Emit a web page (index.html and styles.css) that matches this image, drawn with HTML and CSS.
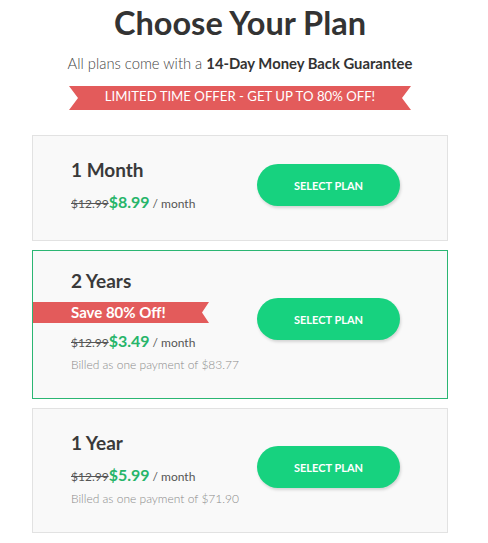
FILE: index.html
```html
<!DOCTYPE html>
<html>
<head>
<meta charset="utf-8">
<link rel="stylesheet" href="styles.css">
</head>
<body>
<div class="page">
  <h1 class="title">Choose Your Plan</h1>
  <p class="subtitle">All plans come with a <strong>14-Day Money Back Guarantee</strong></p>
  <div class="offer">LIMITED TIME OFFER - GET UP TO 80% OFF!</div>

  <div class="plans">
    <div class="card">
      <div class="info">
        <div class="name">1 Month</div>
        <div class="price"><span class="old">$12.99</span><span class="new">$8.99</span><span class="per">/ month</span></div>
      </div>
      <button class="btn">SELECT PLAN</button>
    </div>

    <div class="card featured">
      <div class="info">
        <div class="name">2 Years</div>
        <div class="save">Save 80% Off!</div>
        <div class="price"><span class="old">$12.99</span><span class="new">$3.49</span><span class="per">/ month</span></div>
        <div class="billed">Billed as one payment of $83.77</div>
      </div>
      <button class="btn">SELECT PLAN</button>
    </div>

    <div class="card last">
      <div class="info">
        <div class="name">1 Year</div>
        <div class="price"><span class="old">$12.99</span><span class="new">$5.99</span><span class="per">/ month</span></div>
        <div class="billed">Billed as one payment of $71.90</div>
      </div>
      <button class="btn">SELECT PLAN</button>
    </div>
  </div>
</div>
</body>
</html>
```

FILE: styles.css
```css
* { box-sizing: border-box; }
body {
  margin: 0;
  background: #ffffff;
  font-family: Lato, "Open Sans", "Liberation Sans", sans-serif;
  color: #333;
}
.page {
  width: 480px;
  display: flex;
  flex-direction: column;
  align-items: center;
}
.title {
  margin: 0;
  padding-top: 3px;
  font-size: 32.5px;
  line-height: 40px;
  font-weight: 700;
  color: #333333;
}
.subtitle {
  margin: 11px 0 0;
  font-size: 14.8px;
  line-height: 18px;
  font-weight: 300;
  color: #444;
}
.subtitle strong {
  font-weight: 700;
  color: #333;
}
.offer {
  margin-top: 14px;
  width: 342px;
  height: 24px;
  padding-bottom: 3px;
  line-height: 21px;
  text-align: center;
  background: #e35b5b;
  color: #fff;
  font-size: 13.2px;
  font-weight: 400;
  clip-path: polygon(0 0, 100% 0, calc(100% - 9px) 50%, 100% 100%, 0 100%, 9px 50%);
}
.plans {
  margin-top: 25px;
  width: 416px;
  display: flex;
  flex-direction: column;
  gap: 9px;
}
.card {
  display: flex;
  align-items: center;
  justify-content: space-between;
  background: #f9f9f9;
  border: 1px solid #e2e2e2;
  padding: 22px 47px 24px 38px;
}
.card.featured {
  border-color: #2bb673;
  padding-top: 18px;
  padding-bottom: 25px;
}
.card.last {
  padding-bottom: 25px;
}
.info {
  display: flex;
  flex-direction: column;
}
.name {
  font-size: 19px;
  line-height: 24px;
  font-weight: 700;
  color: #3a3a3a;
}
.price {
  margin-top: 8px;
  line-height: 24px;
  color: #555;
}
.old {
  font-size: 12px;
  text-decoration: line-through;
  color: #555;
}
.new {
  font-size: 16px;
  font-weight: 700;
  color: #27b56a;
  margin-right: 3px;
}
.per {
  font-size: 12px;
  color: #555;
}
.billed {
  margin-top: 2px;
  font-size: 12px;
  line-height: 16px;
  font-weight: 300;
  color: #8a8a8a;
}
.save {
  margin: 9px 0 0 -38px;
  width: 176px;
  height: 21px;
  padding-left: 38px;
  line-height: 20px;
  background: #e35b5b;
  color: #fff;
  font-size: 15px;
  font-weight: 700;
  clip-path: polygon(0 0, 100% 0, calc(100% - 7px) 50%, 100% 100%, 0 100%);
}
.featured .price {
  margin-top: 6px;
}
.btn {
  width: 143px;
  height: 42px;
  margin-bottom: 4px;
  border: 0;
  border-radius: 21px;
  background: #17d27f;
  box-shadow: 1px 2px 3px rgba(0, 0, 0, 0.15);
  color: #fff;
  font-family: Lato, "Open Sans", sans-serif;
  font-size: 11px;
  font-weight: 700;
  padding: 0;
}
```
